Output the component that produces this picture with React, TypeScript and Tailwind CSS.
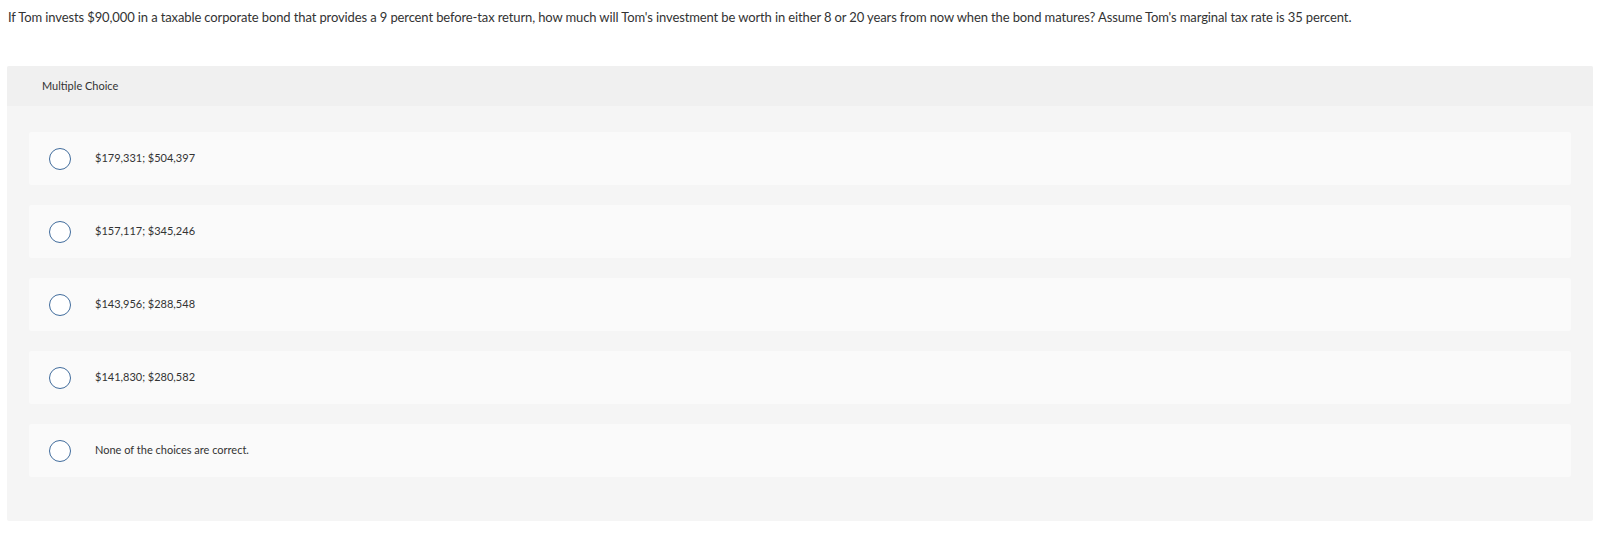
const CHOICES = [
  "$179,331; $504,397",
  "$157,117; $345,246",
  "$143,956; $288,548",
  "$141,830; $280,582",
  "None of the choices are correct.",
];

export default function App() {
  return (
    <div className="bg-white min-h-[556px] w-[1618px] text-[#333333]" style={{ fontFamily: "Lato, 'Open Sans', sans-serif" }}>
      {/* Question */}
      <p className="pl-[8px] pt-[8px] text-[13px] leading-[18px] tracking-[-0.12px]">
        If Tom invests $90,000 in a taxable corporate bond that provides a 9 percent before-tax return, how much will Tom's investment be worth in either 8 or 20 years from now when the bond matures? Assume Tom's marginal tax rate is 35 percent.
      </p>

      {/* Multiple choice panel */}
      <div className="ml-[7px] mt-[40px] w-[1586px] rounded-[2px] bg-[#f5f5f5] overflow-hidden">
        <div className="h-[40px] bg-[#f0f0f0] flex items-center pl-[35px] text-[11px]">
          Multiple Choice
        </div>
        <div className="px-[22px] pt-[26px] pb-[44px] flex flex-col gap-[20px]">
          {CHOICES.map((c) => (
            <div key={c} className="h-[53px] bg-[#fafafa] rounded-[2px] flex items-center pl-[20px]">
              <span className="w-[22px] h-[22px] rounded-full border-[1.5px] border-[#416c9c] bg-white shrink-0" />
              <span className="ml-[24px] text-[11px]">{c}</span>
            </div>
          ))}
        </div>
      </div>
    </div>
  );
}
